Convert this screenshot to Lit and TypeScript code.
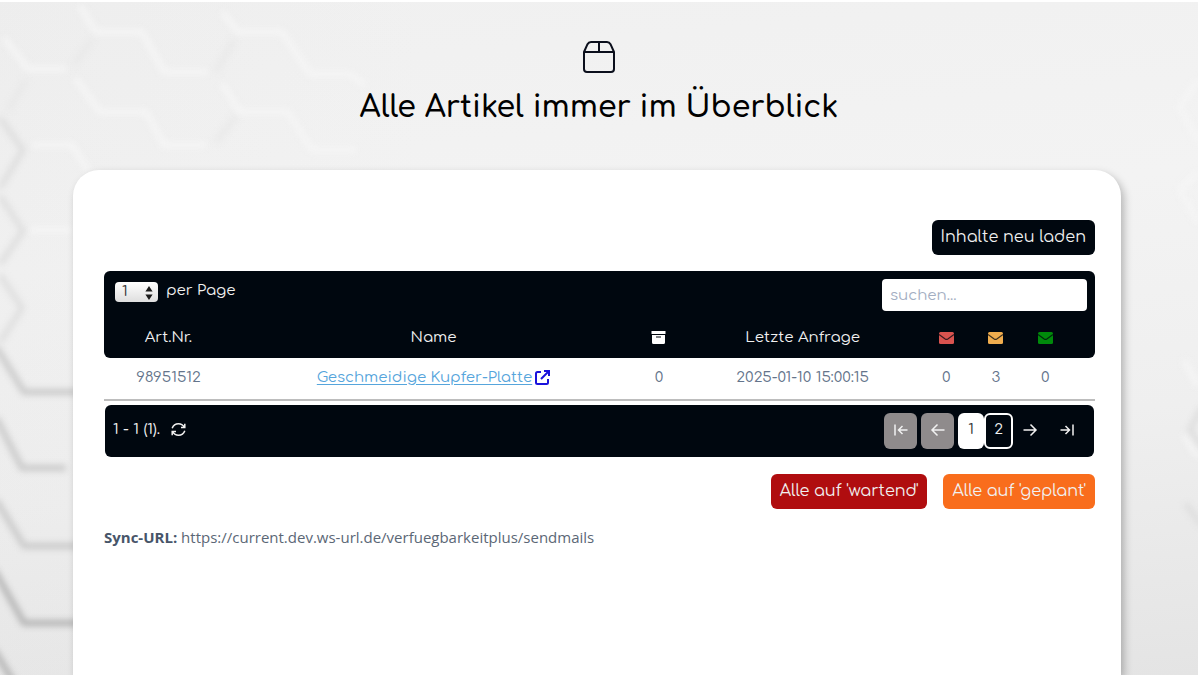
import { LitElement, html, css, svg } from "lit";
import { customElement, state } from "lit/decorators.js";

interface Article {
  number: string;
  name: string;
  stock: number;
  lastRequest: string;
  waiting: number;
  planned: number;
  sent: number;
}

const articles: Article[] = [
  {
    number: "98951512",
    name: "Geschmeidige Kupfer-Platte",
    stock: 0,
    lastRequest: "2025-01-10 15:00:15",
    waiting: 0,
    planned: 3,
    sent: 0,
  },
];

const envelope = (tone: string, label: string) => html`
  <svg class="envelope ${tone}" viewBox="0 0 15 12" role="img" aria-label=${label}>
    <rect width="15" height="12" rx="1.5" />
    <path d="M0 2.4 L6.2 6.9 Q7.5 7.8 8.8 6.9 L15 2.4" />
  </svg>
`;

const arrow = (d: string) => html`
  <svg class="arrow" viewBox="0 0 16 16" aria-hidden="true"><path d=${d} /></svg>
`;

@customElement("hex-backdrop")
class HexBackdrop extends LitElement {
  static styles = css`
    :host {
      display: block;
      background: linear-gradient(175deg, #f0f0f0 0%, #f3f3f3 35%, #efefef 65%, #e4e4e4 100%);
    }
    .pattern {
      display: block;
      width: 100%;
      height: 100%;
    }
    .pattern path {
      fill: none;
      stroke-linejoin: round;
    }
    .soft {
      filter: blur(3px);
    }
    .ridge path {
      stroke: #f5f5f5;
      stroke-width: 6;
    }
    .shadow path {
      stroke: #e9e9e9;
      stroke-width: 6;
    }
    .faint path {
      stroke: #dcdcdc;
      stroke-width: 5;
    }
    .groove path {
      stroke: #c9c9c9;
      stroke-width: 6;
    }
    .deep path {
      stroke: #b3b3b3;
      stroke-width: 6;
    }
  `;

  render() {
    return html`
      <svg class="pattern" viewBox="0 0 1198 673" preserveAspectRatio="xMinYMin slice" aria-hidden="true">
        <defs>
          <linearGradient id="shade" x1="0" x2="1" y1="0" y2="0">
            <stop offset="0" stop-color="#dedede" stop-opacity="0.15" />
            <stop offset="1" stop-color="#dedede" stop-opacity="0" />
          </linearGradient>
        </defs>
        <rect width="420" height="673" fill="url(#shade)" />
        ${svg`
          <g class="soft shadow">
            <path d="M74 62 L92 38 M26 78 L8 108 M216 140 L236 114 M216 70 L234 38" />
          </g>
          <g class="soft ridge">
            <path d="M4 36 L28 67 H66" />
            <path d="M80 4 L96 30 H142 L164 70 H208" />
            <path d="M75 76 L100 110 H146 L164 143 H206" />
            <path d="M222 10 L238 30 H282 L310 72 H350 L366 84" />
            <path d="M222 82 L240 110 H288 L312 148 H356" />
            <path d="M32 143 H72 L88 168" />
            <path d="M30 228 H72" />
            <path d="M1198 78 L1180 105 L1198 140 M1198 170 L1180 188 L1198 220" />
            <path d="M1184 358 L1198 384 M1184 432 L1198 455" />
          </g>
          <g class="soft faint">
            <path d="M0 116 L23 148 L0 186" />
            <path d="M0 194 L23 229 L0 262" />
            <path d="M0 273 L22 306 L0 340" />
            <path d="M1202 405 L1190 428 L1202 445 M1186 502 L1202 524" />
          </g>
          <g class="soft groove">
            <path d="M-4 345 L24 390 H80" />
            <path d="M-4 416 L22 466 H66" />
            <path d="M-4 498 L24 544 H80" />
          </g>
          <g class="soft deep">
            <path d="M-6 568 L24 621 H80" />
            <path d="M-6 648 L16 684" />
          </g>
        `}
      </svg>
    `;
  }
}

@customElement("article-table")
class ArticleTable extends LitElement {
  static styles = css`
    :host {
      display: block;
      color: #64748b;
      font-size: 15px;
    }
    .toolbar {
      display: flex;
      justify-content: space-between;
      align-items: flex-start;
      height: 46px;
      box-sizing: border-box;
      padding: 8px 8px 0 11px;
      border-radius: 6px 6px 0 0;
      background: #00070f;
      color: #f1f1f1;
    }
    .per-page {
      display: flex;
      align-items: center;
      gap: 8px;
      line-height: 24px;
    }
    .select-box {
      position: relative;
      display: flex;
    }
    .select-box select {
      appearance: none;
      width: 43px;
      height: 20px;
      margin: 2px 0 0;
      padding: 0 16px 0 7px;
      border: 0;
      border-radius: 4px;
      background: linear-gradient(#ffffff, #dedede);
      color: #333333;
      font: inherit;
      line-height: 20px;
    }
    .select-box svg {
      position: absolute;
      top: 6px;
      right: 5px;
      width: 8px;
      height: 14px;
      fill: #1a1a1a;
      pointer-events: none;
    }
    .search {
      width: 205px;
      height: 32px;
      box-sizing: border-box;
      padding: 0 8px;
      border: 0;
      border-radius: 4px;
      background: #ffffff;
      color: #334155;
      font: inherit;
    }
    .search::placeholder {
      color: #a3aec2;
      opacity: 1;
    }
    .grid {
      width: 100%;
      table-layout: fixed;
      border-collapse: separate;
      border-spacing: 0;
      text-align: center;
    }
    .grid th,
    .grid td {
      padding: 0;
    }
    .grid th {
      height: 41px;
      background: #00070f;
      color: #f1f1f1;
      font-weight: 400;
    }
    .grid th:first-child {
      border-bottom-left-radius: 6px;
    }
    .grid th:last-child {
      border-bottom-right-radius: 6px;
    }
    .grid td {
      height: 43px;
      padding-bottom: 3px;
      box-sizing: border-box;
      border-bottom: 2px solid #bdbdbd;
    }
    .grid th:last-child,
    .grid td:last-child {
      padding-right: 25px;
    }
    .col-number {
      width: 13%;
    }
    .col-name {
      width: 40.5%;
    }
    .col-stock {
      width: 5%;
    }
    .col-date {
      width: 24%;
    }
    .col-mail {
      width: 5%;
    }
    .name {
      display: inline-flex;
      align-items: center;
      color: #56a5dc;
      text-underline-offset: 2px;
    }
    .name svg {
      width: 15px;
      height: 15px;
      margin-left: 3px;
      fill: none;
      stroke: #1a12dc;
      stroke-width: 2;
    }
    .box {
      width: 15px;
      height: 13px;
      fill: #ffffff;
      vertical-align: middle;
    }
    .envelope {
      width: 15px;
      height: 12px;
      vertical-align: middle;
    }
    .envelope path {
      fill: none;
      stroke: #00070f;
      stroke-opacity: 0.75;
      stroke-width: 1.2;
    }
    .red {
      fill: #d9534f;
    }
    .amber {
      fill: #f0ad4e;
    }
    .green {
      fill: #008a0b;
    }
    .pager {
      display: flex;
      justify-content: space-between;
      align-items: center;
      height: 52px;
      box-sizing: border-box;
      margin: 4px 1px 0;
      padding: 0 11px 0 8px;
      border-radius: 6px;
      background: #00070f;
      color: #f1f1f1;
    }
    .range {
      display: flex;
      align-items: center;
      gap: 11px;
      padding-bottom: 4px;
    }
    .pager button {
      display: flex;
      align-items: center;
      justify-content: center;
      width: 33px;
      height: 36px;
      padding: 0 0 3px;
      border: 0;
      border-radius: 6px;
      background: none;
      color: #f1f1f1;
      font: inherit;
    }
    .range .reload {
      width: 15px;
      height: 16px;
      padding: 0;
    }
    .reload svg {
      width: 15px;
      height: 15px;
      fill: none;
      stroke: currentColor;
      stroke-width: 1.5;
    }
    .pages {
      display: flex;
      gap: 4px;
    }
    .numbers {
      display: flex;
    }
    .pages button:disabled {
      background: #8f8b8c;
    }
    .pages .current {
      width: 26px;
      background: #ffffff;
      color: #333333;
    }
    .pages .page {
      width: 29px;
      border: 2px solid #ffffff;
    }
    .arrow {
      width: 16px;
      height: 16px;
      fill: none;
      stroke: currentColor;
      stroke-width: 1.5;
    }
  `;

  @state() private query = "";

  private onSearch(event: Event) {
    this.query = (event.target as HTMLInputElement).value;
  }

  private row(article: Article) {
    return html`
      <tr>
        <td>${article.number}</td>
        <td>
          <a class="name" href="#artikel-${article.number}"
            >${article.name}<svg viewBox="0 0 15 15" aria-hidden="true">
              <path d="M6 2 H2.5 Q1 2 1 3.5 V12.5 Q1 14 2.5 14 H11.5 Q13 14 13 12.5 V9" />
              <path d="M9 1 H14 V6 M14 1 L6 9" /></svg
          ></a>
        </td>
        <td>${article.stock}</td>
        <td>${article.lastRequest}</td>
        <td>${article.waiting}</td>
        <td>${article.planned}</td>
        <td>${article.sent}</td>
      </tr>
    `;
  }

  render() {
    const needle = this.query.toLowerCase();
    const rows = articles.filter((a) => (a.name + a.number).toLowerCase().includes(needle));
    return html`
      <div class="toolbar">
        <div class="per-page">
          <span class="select-box">
            <select id="per-page">
              <option>1</option>
              <option>10</option>
              <option>25</option>
            </select>
            <svg viewBox="0 0 8 14" aria-hidden="true"><path d="M4 0 L7.6 5.6 H0.4 Z M4 14 L0.4 8.4 H7.6 Z" /></svg>
          </span>
          <label for="per-page">per Page</label>
        </div>
        <input class="search" type="text" placeholder="suchen..." aria-label="suchen" @input=${this.onSearch} />
      </div>
      <table class="grid">
        <colgroup>
          <col class="col-number" />
          <col class="col-name" />
          <col class="col-stock" />
          <col class="col-date" />
          <col class="col-mail" />
          <col class="col-mail" />
          <col />
        </colgroup>
        <thead>
          <tr>
            <th scope="col">Art.Nr.</th>
            <th scope="col">Name</th>
            <th scope="col">
              <svg class="box" viewBox="0 0 15 13" role="img" aria-label="Bestand">
                <path d="M0.5 0 H14.5 V3 H0.5 Z" />
                <path fill-rule="evenodd" d="M1 4 H14 V11.5 Q14 13 12.5 13 H2.5 Q1 13 1 11.5 Z M5 5.5 V6.5 H10 V5.5 Z" />
              </svg>
            </th>
            <th scope="col">Letzte Anfrage</th>
            <th scope="col">${envelope("red", "wartend")}</th>
            <th scope="col">${envelope("amber", "geplant")}</th>
            <th scope="col">${envelope("green", "gesendet")}</th>
          </tr>
        </thead>
        <tbody>
          ${rows.map((a) => this.row(a))}
        </tbody>
      </table>
      <nav class="pager" aria-label="Seiten">
        <div class="range">
          <span>1 - 1 (1).</span>
          <button class="reload" type="button" aria-label="Aktualisieren">
            <svg viewBox="0 0 15 15" aria-hidden="true">
              <path d="M1.2 6.2 C2.5 2.6 5 1.7 7.5 1.7 C10 1.7 12 3 13.4 5.4 M13.8 1.8 V5.6 H10" />
              <path d="M13.8 8.8 C12.5 12.4 10 13.3 7.5 13.3 C5 13.3 3 12 1.6 9.6 M1.2 13.2 V9.4 H5" />
            </svg>
          </button>
        </div>
        <div class="pages">
          <button type="button" disabled aria-label="Erste Seite">${arrow("M2 2.5 V13.5 M14.5 8 H5.5 M9.5 4 L5.5 8 L9.5 12")}</button>
          <button type="button" disabled aria-label="Zurück">${arrow("M14.5 8 H2 M7.5 2.5 L2 8 L7.5 13.5")}</button>
          <div class="numbers">
            <button class="current" type="button" aria-current="page">1</button>
            <button class="page" type="button">2</button>
            <button type="button" aria-label="Weiter">${arrow("M1.5 8 H14 M8.5 2.5 L14 8 L8.5 13.5")}</button>
          </div>
          <button type="button" aria-label="Letzte Seite">${arrow("M14 2.5 V13.5 M1.5 8 H10.5 M6.5 4 L10.5 8 L6.5 12")}</button>
        </div>
      </nav>
    `;
  }
}

@customElement("app-root")
class AppRoot extends LitElement {
  static styles = css`
    :host {
      display: flex;
      flex-direction: column;
      position: relative;
      min-height: 100vh;
      box-sizing: border-box;
      padding: 2px 2px 0 0;
      overflow: hidden;
      background: #ffffff;
      font-family: Comfortaa, Inter, "Liberation Sans", sans-serif;
      color: #000000;
    }
    .backdrop {
      position: absolute;
      inset: 2px 2px 0 0;
    }
    .head {
      position: relative;
      display: flex;
      flex-direction: column;
      align-items: center;
      gap: 14px;
      padding-top: 38px;
    }
    .parcel {
      width: 34px;
      height: 34px;
      fill: none;
      stroke: #0b0f1c;
      stroke-width: 2;
      stroke-linejoin: round;
    }
    .title {
      margin: 0 0 42px;
      font-size: 30px;
      line-height: 40px;
      font-weight: 600;
    }
    .panel {
      position: relative;
      flex: 1;
      margin: 0 77px 0 73px;
      padding: 50px 26px 0 31px;
      border-radius: 26px 26px 0 0;
      background: #ffffff;
      box-shadow: 3px 4px 9px rgba(0, 0, 0, 0.26);
    }
    .actions {
      display: flex;
      justify-content: flex-end;
      gap: 16px;
    }
    .actions.top {
      margin-bottom: 16px;
    }
    .actions.bottom {
      margin-top: 17px;
    }
    .button {
      height: 35px;
      padding: 0 9px 2px;
      border: 0;
      border-radius: 6px;
      background: #00070f;
      color: #f1f1f1;
      font: inherit;
      font-size: 16px;
    }
    .button.waiting {
      background: #b00d0f;
    }
    .button.planned {
      background: #f96d1c;
    }
    .sync {
      margin: 18px 0 0;
      color: #5b6776;
      font-family: "Open Sans", sans-serif;
      font-size: 15px;
      line-height: 20px;
    }
    .sync strong {
      color: #475569;
    }
  `;

  render() {
    return html`
      <hex-backdrop class="backdrop"></hex-backdrop>
      <header class="head">
        <svg class="parcel" viewBox="0 0 34 34" aria-hidden="true">
          <path d="M2 12 L5.5 4.2 Q6.6 2 9 2 H25 Q27.4 2 28.5 4.2 L32 12 V29 Q32 32 29 32 H5 Q2 32 2 29 Z" />
          <path d="M2 12 H32 M17 2 V12" />
        </svg>
        <h1 class="title">Alle Artikel immer im Überblick</h1>
      </header>
      <main class="panel">
        <div class="actions top">
          <button class="button" type="button">Inhalte neu laden</button>
        </div>
        <article-table></article-table>
        <div class="actions bottom">
          <button class="button waiting" type="button">Alle auf 'wartend'</button>
          <button class="button planned" type="button">Alle auf 'geplant'</button>
        </div>
        <p class="sync"><strong>Sync-URL:</strong> https://current.dev.ws-url.de/verfuegbarkeitplus/sendmails</p>
      </main>
    `;
  }
}
